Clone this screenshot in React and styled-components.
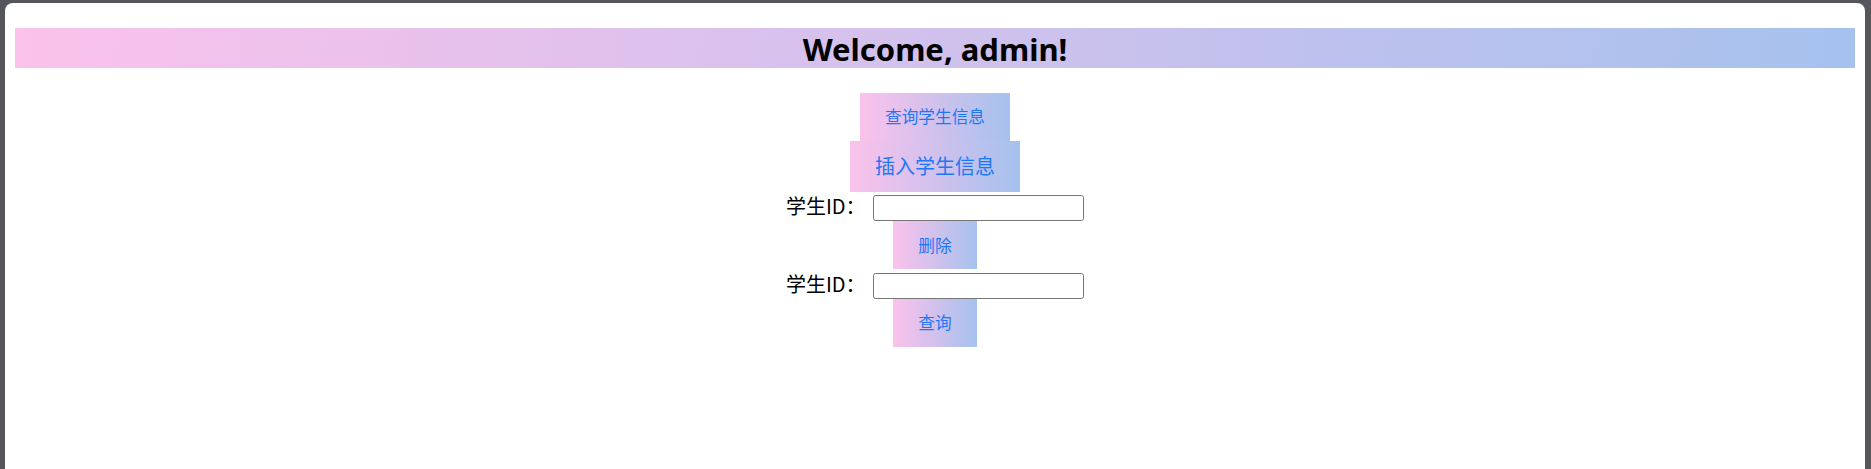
import React from "react";
import styled, { createGlobalStyle } from "styled-components";

const Global = createGlobalStyle`
  html, body { margin: 0; padding: 0; height: 100%; }
  body {
    background: #55565b;
    font-family: "Noto Sans", "Noto Sans CJK SC", sans-serif;
    color: #000;
  }
  #root { height: 100%; }
`;

const Frame = styled.div`
  height: 100%;
  box-sizing: border-box;
  padding: 3px 6px 0 5px;
  display: flex;
`;

const Panel = styled.main`
  flex: 1;
  background: #fff;
  border-radius: 8px 8px 0 0;
  padding: 25px 10px;
  display: flex;
  flex-direction: column;
  align-items: center;
`;

const Header = styled.header`
  align-self: stretch;
  height: 40px;
  background: linear-gradient(100deg, #fbc2eb 0%, #a6c1ee 100%);
  display: flex;
  align-items: center;
  justify-content: center;
`;

const Title = styled.h1`
  margin: 0;
  font-family: "Noto Sans", "Noto Sans CJK SC", sans-serif;
  font-weight: 700;
  font-size: 31px;
  line-height: 40px;
  padding-top: 1px;
  color: #000;
`;

const Actions = styled.section`
  margin-top: 24.5px;
  display: flex;
  flex-direction: column;
  align-items: center;
`;

const GradButton = styled.button`
  border: none;
  border-radius: 0;
  background: linear-gradient(to right, #fbc2eb, #a6c1ee);
  color: #1e78f5;
  font-family: "Noto Sans CJK SC", "Noto Sans", sans-serif;
  font-size: ${(p) => (p.$large ? "20px" : "16.67px")};
  line-height: ${(p) => (p.$large ? "26px" : "23px")};
  padding: 12.5px 25px;
  margin: 0;
  cursor: pointer;
`;

const FieldRow = styled.label`
  display: flex;
  align-items: flex-end;
  gap: 7px;
  height: 29.5px;
`;

const FieldLabel = styled.span`
  font-family: "Noto Sans CJK SC", "Noto Sans", sans-serif;
  font-size: 20px;
  line-height: 26px;
  width: 80px;
  white-space: nowrap;
  align-self: center;
`;

const TextInput = styled.input`
  box-sizing: border-box;
  width: 211px;
  height: 26px;
  border: 1px solid #767676;
  border-radius: 2.5px;
  background: #fff;
  padding: 1px 3px;
  margin: 0;
  font-size: 16px;
`;

export default function App() {
  return (
    <>
      <Global />
      <Frame>
        <Panel>
          <Header>
            <Title>Welcome, admin!</Title>
          </Header>
          <Actions>
            <GradButton>查询学生信息</GradButton>
            <GradButton $large>插入学生信息</GradButton>
            <FieldRow>
              <FieldLabel>学生ID：</FieldLabel>
              <TextInput type="text" />
            </FieldRow>
            <GradButton>删除</GradButton>
            <FieldRow>
              <FieldLabel>学生ID：</FieldLabel>
              <TextInput type="text" />
            </FieldRow>
            <GradButton>查询</GradButton>
          </Actions>
        </Panel>
      </Frame>
    </>
  );
}
